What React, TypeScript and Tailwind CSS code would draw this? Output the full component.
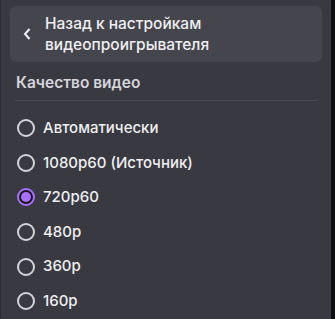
import { useState } from "react";

const options = [
  "Автоматически",
  "1080p60 (Источник)",
  "720p60",
  "480p",
  "360p",
  "160p",
];

function Radio({ checked }: { checked: boolean }) {
  if (checked) {
    return (
      <span className="flex h-[18px] w-[18px] shrink-0 items-center justify-center rounded-full border-2 border-[#a970ff] bg-[#18181b]">
        <span className="h-[10px] w-[10px] rounded-full bg-[#a970ff]" />
      </span>
    );
  }
  return <span className="h-[18px] w-[18px] shrink-0 rounded-full border-2 border-[#d3d3d9]" />;
}

export default function App() {
  const [selected, setSelected] = useState("720p60");

  return (
    <div className="flex h-[319px] w-[335px] bg-[#0e0e10] font-['Inter',sans-serif]">
      <div className="flex h-full w-[331px] flex-col border-l border-[#2c2c32] bg-[#393941] px-[9px] pt-[6px]">
        <button className="flex h-[56px] w-[312px] items-center rounded-[6px] bg-[#45454d] text-left">
          <svg width="10" height="14" viewBox="0 0 10 14" className="ml-[12px] mr-[13px] shrink-0">
            <path d="M7.5 2 3 7l4.5 5" fill="none" stroke="#efeff1" strokeWidth="2" />
          </svg>
          <span className="text-[15.5px] font-medium leading-[21px] text-[#efeff1]">
            Назад к настройкам
            <br />
            видеопроигрывателя
          </span>
        </button>
        <div className="px-[6px] pt-[11px] pb-[7px] text-[15.5px] font-semibold leading-[20px] text-[#d6d6dc]">
          Качество видео
        </div>
        <div className="mx-[5px] h-px bg-[#4a4a53]" />
        <div className="mt-[10px] flex flex-col">
          {options.map((o) => (
            <label
              key={o}
              onClick={() => setSelected(o)}
              className="flex h-[34.6px] cursor-pointer items-center gap-[8px] px-[7px] text-[15px] font-medium text-[#efeff1]"
            >
              <Radio checked={selected === o} />
              <span>{o}</span>
            </label>
          ))}
        </div>
      </div>
    </div>
  );
}
